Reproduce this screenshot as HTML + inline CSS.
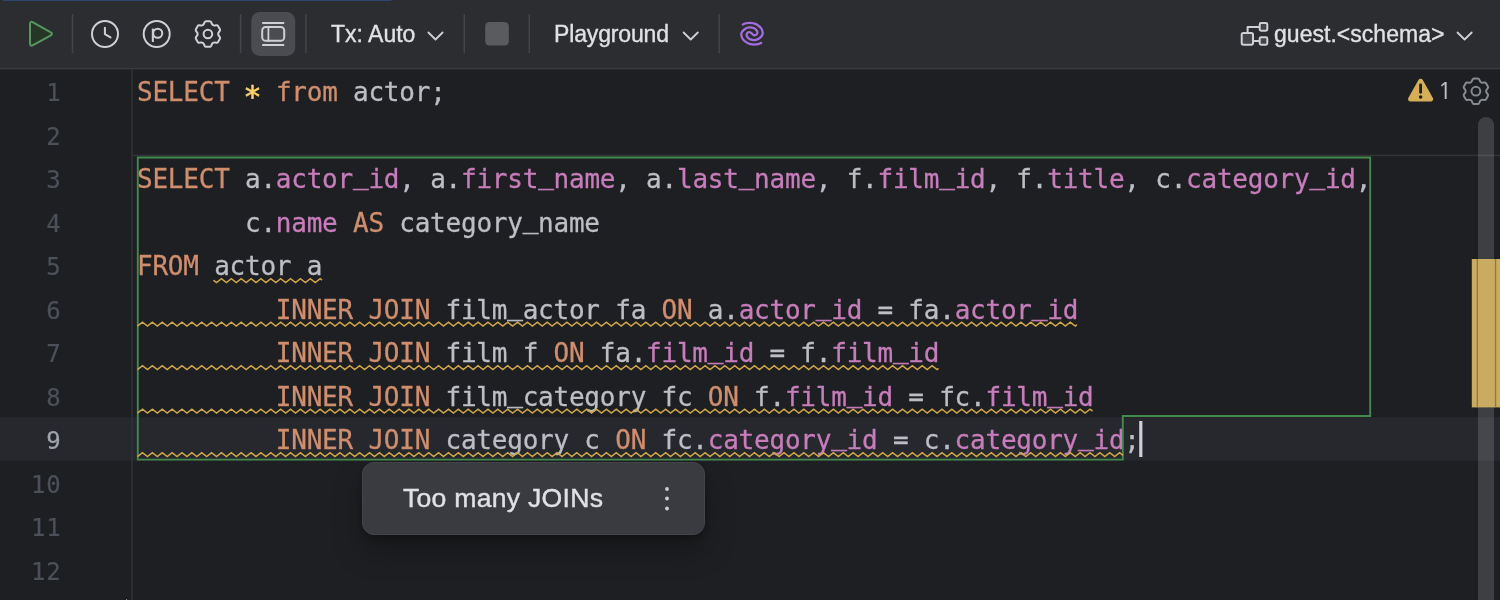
<!DOCTYPE html>
<html lang="en">
<head>
<meta charset="utf-8">
<title>Console</title>
<style>
html,body{margin:0;padding:0;}
body{width:1500px;height:600px;overflow:hidden;background:#1e1f22;position:relative;
  font-family:"Liberation Sans",sans-serif;color:#dfe1e5;}
.ln,.cl,.tbtxt,#tiptxt,#wcount{will-change:transform;}
.tbtxt{position:absolute;top:0;height:70px;line-height:69.4px;font-size:23px;-webkit-text-stroke:0.35px #dfe1e5;color:#dfe1e5;white-space:nowrap;}
svg{position:absolute;overflow:visible;}
.ln{position:absolute;left:0;width:61.6px;text-align:right;height:43.5px;line-height:44.2px;
  font-family:"DejaVu Sans Mono","Liberation Mono",monospace;font-size:24px;letter-spacing:0.9px;color:#4b5059;-webkit-text-stroke:0.2px currentColor;}
.cl{position:absolute;left:137px;height:43.5px;line-height:43.5px;white-space:pre;
  font-family:"DejaVu Sans Mono","Liberation Mono",monospace;font-size:26px;letter-spacing:-0.228px;color:#bcbec4;}
.cl i{font-style:normal;position:relative;top:-4.2px;-webkit-text-stroke:0.5px currentColor;}
.cl{-webkit-text-stroke:0.3px currentColor;}
.k{color:#cf8e6d;}
.c{color:#c77dbb;}
.s{color:#ffd36c;display:inline-block;transform:translate(-0.3px,4.7px) scale(1.18);-webkit-text-stroke:0.45px currentColor;}
#tip{position:absolute;left:362px;top:462px;width:341px;height:71px;border-radius:12px;background:#393b40;
  border:1px solid #43454a;box-shadow:0 3px 8px rgba(0,0,0,.28),0 16px 30px rgba(0,0,0,.26);}
#wcount{position:absolute;left:1438.3px;top:70px;height:42px;line-height:42px;font-size:23px;font-family:"NanumGothic","Liberation Sans",sans-serif;color:#bcbec4;-webkit-text-stroke:0.2px #bcbec4;}
#tiptxt{position:absolute;left:402.8px;top:462px;height:72px;line-height:72px;font-size:26.6px;letter-spacing:0.26px;-webkit-text-stroke:0.4px #dfe1e5;color:#dfe1e5;white-space:nowrap;}
</style>
</head>
<body>
<svg id="bg" width="1500" height="600" viewBox="0 0 1500 600" style="left:0;top:0"><rect x="0" y="0" width="1500" height="68" fill="#2b2d30"/><rect x="3" y="0" width="388.5" height="1" fill="#2f4472"/><rect x="0" y="417.3" width="1500" height="43.2" fill="#26282e"/></svg>


<div class="tbtxt" id="t1" style="left:331px">Tx: Auto</div>
<div class="tbtxt" id="t2" style="left:554.1px;letter-spacing:-0.15px">Playground</div>
<div class="tbtxt" id="t3" style="left:1274px;letter-spacing:0.03px">guest.&lt;schema&gt;</div>


<div id="lines">
<div class="ln" style="top:71.1px">1</div>
<div class="cl" style="top:71.1px"><span class="k">SELECT</span> <span class="s">*</span> <span class="k">from</span> actor;</div>
<div class="ln" style="top:114.6px">2</div>
<div class="ln" style="top:158.1px">3</div>
<div class="cl" style="top:158.1px"><span class="k">SELECT</span> a.<span class="c">actor<i>_</i>id</span>, a.<span class="c">first<i>_</i>name</span>, a.<span class="c">last<i>_</i>name</span>, f.<span class="c">film<i>_</i>id</span>, f.<span class="c">title</span>, c.<span class="c">category<i>_</i>id</span>,</div>
<div class="ln" style="top:201.6px">4</div>
<div class="cl" style="top:201.6px">       c.<span class="c">name</span> <span class="k">AS</span> category<i>_</i>name</div>
<div class="ln" style="top:245.1px">5</div>
<div class="cl" style="top:245.1px"><span class="k">FROM</span> actor a</div>
<div class="ln" style="top:288.6px">6</div>
<div class="cl" style="top:288.6px">         <span class="k">INNER JOIN</span> film<i>_</i>actor fa <span class="k">ON</span> a.<span class="c">actor<i>_</i>id</span> = fa.<span class="c">actor<i>_</i>id</span></div>
<div class="ln" style="top:332.1px">7</div>
<div class="cl" style="top:332.1px">         <span class="k">INNER JOIN</span> film f <span class="k">ON</span> fa.<span class="c">film<i>_</i>id</span> = f.<span class="c">film<i>_</i>id</span></div>
<div class="ln" style="top:375.6px">8</div>
<div class="cl" style="top:375.6px">         <span class="k">INNER JOIN</span> film<i>_</i>category fc <span class="k">ON</span> f.<span class="c">film<i>_</i>id</span> = fc.<span class="c">film<i>_</i>id</span></div>
<div class="ln" style="top:419.1px;color:#a1a3ab">9</div>
<div class="cl" style="top:419.1px">         <span class="k">INNER JOIN</span> category c <span class="k">ON</span> fc.<span class="c">category<i>_</i>id</span> = c.<span class="c">category<i>_</i>id</span>;</div>
<div class="ln" style="top:462.6px">10</div>
<div class="ln" style="top:506.1px">11</div>
<div class="ln" style="top:549.6px">12</div>
</div>

<div id="tip"></div>
<svg id="icons" width="1500" height="600" viewBox="0 0 1500 600" style="left:0;top:0" fill="none" stroke-linecap="round" stroke-linejoin="round">
<rect x="0" y="67.8" width="1500" height="1.6" fill="#393b40"/>
<rect x="131.2" y="69.4" width="1.6" height="531" fill="#2f3236"/>
<rect x="132.8" y="154.6" width="1368" height="1.6" fill="#313338"/>
<rect x="71.75" y="14.3" width="1.5" height="38.8" fill="#43454a"/>
<rect x="239.85" y="14.3" width="1.5" height="38.8" fill="#43454a"/>
<rect x="305.15" y="14.3" width="1.5" height="38.8" fill="#43454a"/>
<rect x="463.55" y="14.3" width="1.5" height="38.8" fill="#43454a"/>
<rect x="528.55" y="14.3" width="1.5" height="38.8" fill="#43454a"/>
<rect x="718.45" y="14.3" width="1.5" height="38.8" fill="#43454a"/>
<path d="M30,24.2 L30,43.3 Q30,46.8 33,45.1 L50.4,35.6 Q53.7,33.85 50.4,32.1 L33,22.4 Q30,20.7 30,24.2 Z" fill="#253627" stroke="#57965c" stroke-width="2"/>
<circle cx="105" cy="34" r="13" stroke="#ced0d6" stroke-width="2"/>
<path d="M104.9,27.8 V34.1 L110.5,37.4" stroke="#ced0d6" stroke-width="2"/>
<circle cx="156.7" cy="34" r="13" stroke="#ced0d6" stroke-width="2"/>
<path d="M152.85,28.6 V42" stroke="#ced0d6" stroke-width="2.1" stroke-linecap="butt"/>
<circle cx="157.7" cy="33.25" r="4.55" stroke="#ced0d6" stroke-width="2"/>
<path d="M211.14,22.13 Q210.74,21.21 209.74,21.21 L206.06,21.21 Q205.06,21.21 204.66,22.13 L203.95,23.75 Q203.55,24.67 202.77,25.11 L202.77,25.11 Q201.99,25.56 201.00,25.45 L199.24,25.26 Q198.24,25.15 197.74,26.02 L195.91,29.19 Q195.41,30.06 196.00,30.87 L197.05,32.30 Q197.64,33.10 197.64,34.00 L197.64,34.00 Q197.64,34.90 197.05,35.70 L196.00,37.13 Q195.41,37.94 195.91,38.81 L197.74,41.98 Q198.24,42.85 199.24,42.74 L201.00,42.55 Q201.99,42.44 202.77,42.89 L202.77,42.89 Q203.55,43.33 203.95,44.25 L204.66,45.87 Q205.06,46.79 206.06,46.79 L209.74,46.79 Q210.74,46.79 211.14,45.87 L211.85,44.25 Q212.25,43.33 213.03,42.89 L213.03,42.89 Q213.81,42.44 214.80,42.55 L216.56,42.74 Q217.56,42.85 218.06,41.98 L219.89,38.81 Q220.39,37.94 219.80,37.13 L218.75,35.70 Q218.16,34.90 218.16,34.00 L218.16,34.00 Q218.16,33.10 218.75,32.30 L219.80,30.87 Q220.39,30.06 219.89,29.19 L218.06,26.02 Q217.56,25.15 216.56,25.26 L214.80,25.45 Q213.81,25.56 213.03,25.11 L213.03,25.11 Q212.25,24.67 211.85,23.75Z" stroke="#ced0d6" stroke-width="2"/>
<circle cx="207.9" cy="34" r="4.3" stroke="#ced0d6" stroke-width="2"/>
<rect x="251.3" y="12" width="43.9" height="43.9" rx="8.5" fill="#4b4c51"/>
<path d="M262.2,23 H284.2 M262.2,45 H284.2" stroke="#ced0d6" stroke-width="2" stroke-linecap="butt"/>
<rect x="262.2" y="27" width="22" height="13.8" rx="3.6" stroke="#ced0d6" stroke-width="2"/>
<path d="M268.4,27 V40.8" stroke="#ced0d6" stroke-width="1.8"/>
<path d="M428.4,32.5 L435.5,39.5 L442.6,32.5" stroke="#ced0d6" stroke-width="1.8"/>
<path d="M683.6,32.5 L690.7,39.5 L697.8,32.5" stroke="#ced0d6" stroke-width="1.8"/>
<path d="M1457.5,32.5 L1464.6,39.5 L1471.7,32.5" stroke="#ced0d6" stroke-width="1.8"/>
<rect x="485.2" y="22" width="23.6" height="23.6" rx="4.2" fill="#5a5b5e"/>
<path d="M742.78,24.51 C743.34,24.30 744.94,23.52 746.11,23.25 C747.28,22.98 748.60,22.87 749.82,22.87 C751.03,22.87 752.27,22.98 753.42,23.25 C754.58,23.52 755.45,23.67 756.75,24.51 C758.05,25.36 760.22,26.94 761.22,28.31 C762.21,29.69 762.64,31.49 762.74,32.75 C762.83,34.01 762.47,34.89 761.78,35.89 C761.10,36.88 759.81,38.04 758.65,38.73 C757.49,39.43 756.23,39.93 754.85,40.04 C753.47,40.15 751.60,39.88 750.38,39.40 C749.17,38.93 748.17,37.98 747.53,37.19 C746.90,36.39 746.52,35.42 746.59,34.65 C746.65,33.88 747.31,32.96 747.91,32.56 C748.52,32.16 749.51,32.09 750.20,32.28 C750.88,32.47 751.40,33.23 752.00,33.70 C752.60,34.18 753.12,34.94 753.80,35.12 C754.49,35.31 755.48,35.24 756.09,34.84 C756.69,34.44 757.35,33.52 757.41,32.75 C757.48,31.98 757.10,31.01 756.47,30.21 C755.83,29.42 754.83,28.48 753.62,28.00 C752.40,27.53 750.53,27.25 749.15,27.36 C747.77,27.47 746.51,27.97 745.35,28.67 C744.19,29.36 742.90,30.52 742.22,31.52 C741.53,32.51 741.17,33.39 741.26,34.65 C741.36,35.91 741.79,37.71 742.78,39.09 C743.78,40.46 745.95,42.04 747.25,42.89 C748.55,43.73 749.42,43.88 750.58,44.15 C751.73,44.42 752.97,44.53 754.18,44.53 C755.40,44.53 756.72,44.42 757.89,44.15 C759.06,43.88 760.66,43.10 761.22,42.89" stroke="#a56de2" stroke-width="2.25"/>
<path d="M1247.6,33 V27 H1259.5 M1254,41 H1259.5" stroke="#ced0d6" stroke-width="2"/>
<rect x="1241.7" y="33" width="11.3" height="11.7" rx="1.6" fill="#43454a" stroke="#ced0d6" stroke-width="2"/>
<rect x="1259.7" y="23" width="7.6" height="7.7" rx="1.4" fill="#43454a" stroke="#ced0d6" stroke-width="2"/>
<rect x="1259.7" y="37.2" width="7.6" height="7.5" rx="1.4" fill="#43454a" stroke="#ced0d6" stroke-width="2"/>
<path d="M1420.6,81.3 L1430.6,99 H1410.6 Z" fill="#d6ae58" stroke="#d6ae58" stroke-width="5"/>
<path d="M1420.6,84.8 V92.3" stroke="#1e1f22" stroke-width="2.8"/>
<circle cx="1420.6" cy="97" r="1.75" fill="#1e1f22"/>
<path d="M1479.14,79.33 Q1478.74,78.41 1477.74,78.41 L1474.06,78.41 Q1473.06,78.41 1472.66,79.33 L1471.95,80.95 Q1471.55,81.87 1470.77,82.31 L1470.77,82.31 Q1469.99,82.76 1469.00,82.65 L1467.24,82.46 Q1466.24,82.35 1465.74,83.22 L1463.91,86.39 Q1463.41,87.26 1464.00,88.07 L1465.05,89.50 Q1465.64,90.30 1465.64,91.20 L1465.64,91.20 Q1465.64,92.10 1465.05,92.90 L1464.00,94.33 Q1463.41,95.14 1463.91,96.01 L1465.74,99.18 Q1466.24,100.05 1467.24,99.94 L1469.00,99.75 Q1469.99,99.64 1470.77,100.09 L1470.77,100.09 Q1471.55,100.53 1471.95,101.45 L1472.66,103.07 Q1473.06,103.99 1474.06,103.99 L1477.74,103.99 Q1478.74,103.99 1479.14,103.07 L1479.85,101.45 Q1480.25,100.53 1481.03,100.09 L1481.03,100.09 Q1481.81,99.64 1482.80,99.75 L1484.56,99.94 Q1485.56,100.05 1486.06,99.18 L1487.89,96.01 Q1488.39,95.14 1487.80,94.33 L1486.75,92.90 Q1486.16,92.10 1486.16,91.20 L1486.16,91.20 Q1486.16,90.30 1486.75,89.50 L1487.80,88.07 Q1488.39,87.26 1487.89,86.39 L1486.06,83.22 Q1485.56,82.35 1484.56,82.46 L1482.80,82.65 Q1481.81,82.76 1481.03,82.31 L1481.03,82.31 Q1480.25,81.87 1479.85,80.95Z" stroke="#868a91" stroke-width="2"/>
<circle cx="1475.9" cy="91.2" r="4.4" stroke="#868a91" stroke-width="2"/>
<path d="M137.8,157.5 H1370.2 V416 H1122.8 V459.6 H137.8 Z" stroke="#42894d" stroke-width="1.9" stroke-linejoin="miter"/>
<path d="M214.00,280.55 L216.52,282.55 L221.46,278.65 L226.39,282.55 L231.33,278.65 L236.26,282.55 L241.20,278.65 L246.13,282.55 L251.07,278.65 L256.00,282.55 L260.94,278.65 L265.88,282.55 L270.81,278.65 L275.75,282.55 L280.68,278.65 L285.62,282.55 L290.55,278.65 L295.49,282.55 L300.42,278.65 L305.36,282.55 L310.29,278.65 L315.23,282.55 L320.16,278.65 L321.50,279.71" stroke="#d0a748" stroke-width="1.55" stroke-linejoin="miter"/>
<path d="M138.00,325.71 L142.50,322.15 L147.44,326.05 L152.37,322.15 L157.31,326.05 L162.24,322.15 L167.18,326.05 L172.11,322.15 L177.04,326.05 L181.98,322.15 L186.91,326.05 L191.85,322.15 L196.78,326.05 L201.72,322.15 L206.66,326.05 L211.59,322.15 L216.52,326.05 L221.46,322.15 L226.39,326.05 L231.33,322.15 L236.26,326.05 L241.20,322.15 L246.13,326.05 L251.07,322.15 L256.00,326.05 L260.94,322.15 L265.88,326.05 L270.81,322.15 L275.75,326.05 L280.68,322.15 L285.62,326.05 L290.55,322.15 L295.49,326.05 L300.42,322.15 L305.36,326.05 L310.29,322.15 L315.23,326.05 L320.16,322.15 L325.10,326.05 L330.03,322.15 L334.96,326.05 L339.90,322.15 L344.83,326.05 L349.77,322.15 L354.70,326.05 L359.64,322.15 L364.57,326.05 L369.51,322.15 L374.44,326.05 L379.38,322.15 L384.31,326.05 L389.25,322.15 L394.18,326.05 L399.12,322.15 L404.06,326.05 L408.99,322.15 L413.92,326.05 L418.86,322.15 L423.79,326.05 L428.73,322.15 L433.66,326.05 L438.60,322.15 L443.53,326.05 L448.47,322.15 L453.40,326.05 L458.34,322.15 L463.27,326.05 L468.21,322.15 L473.14,326.05 L478.08,322.15 L483.01,326.05 L487.95,322.15 L492.88,326.05 L497.82,322.15 L502.75,326.05 L507.69,322.15 L512.62,326.05 L517.56,322.15 L522.49,326.05 L527.43,322.15 L532.37,326.05 L537.30,322.15 L542.23,326.05 L547.17,322.15 L552.11,326.05 L557.04,322.15 L561.97,326.05 L566.91,322.15 L571.85,326.05 L576.78,322.15 L581.71,326.05 L586.65,322.15 L591.59,326.05 L596.52,322.15 L601.45,326.05 L606.39,322.15 L611.33,326.05 L616.26,322.15 L621.19,326.05 L626.13,322.15 L631.06,326.05 L636.00,322.15 L640.93,326.05 L645.87,322.15 L650.80,326.05 L655.74,322.15 L660.67,326.05 L665.61,322.15 L670.54,326.05 L675.48,322.15 L680.41,326.05 L685.35,322.15 L690.28,326.05 L695.22,322.15 L700.15,326.05 L705.09,322.15 L710.02,326.05 L714.96,322.15 L719.89,326.05 L724.83,322.15 L729.76,326.05 L734.70,322.15 L739.63,326.05 L744.57,322.15 L749.50,326.05 L754.44,322.15 L759.38,326.05 L764.31,322.15 L769.25,326.05 L774.18,322.15 L779.11,326.05 L784.05,322.15 L788.98,326.05 L793.92,322.15 L798.85,326.05 L803.79,322.15 L808.72,326.05 L813.66,322.15 L818.59,326.05 L823.53,322.15 L828.46,326.05 L833.40,322.15 L838.33,326.05 L843.27,322.15 L848.20,326.05 L853.14,322.15 L858.07,326.05 L863.01,322.15 L867.94,326.05 L872.88,322.15 L877.81,326.05 L882.75,322.15 L887.68,326.05 L892.62,322.15 L897.55,326.05 L902.49,322.15 L907.42,326.05 L912.36,322.15 L917.29,326.05 L922.23,322.15 L927.16,326.05 L932.10,322.15 L937.03,326.05 L941.97,322.15 L946.90,326.05 L951.84,322.15 L956.77,326.05 L961.71,322.15 L966.64,326.05 L971.58,322.15 L976.51,326.05 L981.45,322.15 L986.38,326.05 L991.32,322.15 L996.25,326.05 L1001.19,322.15 L1006.12,326.05 L1011.06,322.15 L1015.99,326.05 L1020.93,322.15 L1025.86,326.05 L1030.80,322.15 L1035.73,326.05 L1040.67,322.15 L1045.61,326.05 L1050.54,322.15 L1055.47,326.05 L1060.41,322.15 L1065.34,326.05 L1070.28,322.15 L1075.21,326.05 L1076.50,325.03" stroke="#d0a748" stroke-width="1.55" stroke-linejoin="miter"/>
<path d="M138.00,369.21 L142.50,365.65 L147.44,369.55 L152.37,365.65 L157.31,369.55 L162.24,365.65 L167.18,369.55 L172.11,365.65 L177.04,369.55 L181.98,365.65 L186.91,369.55 L191.85,365.65 L196.78,369.55 L201.72,365.65 L206.66,369.55 L211.59,365.65 L216.52,369.55 L221.46,365.65 L226.39,369.55 L231.33,365.65 L236.26,369.55 L241.20,365.65 L246.13,369.55 L251.07,365.65 L256.00,369.55 L260.94,365.65 L265.88,369.55 L270.81,365.65 L275.75,369.55 L280.68,365.65 L285.62,369.55 L290.55,365.65 L295.49,369.55 L300.42,365.65 L305.36,369.55 L310.29,365.65 L315.23,369.55 L320.16,365.65 L325.10,369.55 L330.03,365.65 L334.96,369.55 L339.90,365.65 L344.83,369.55 L349.77,365.65 L354.70,369.55 L359.64,365.65 L364.57,369.55 L369.51,365.65 L374.44,369.55 L379.38,365.65 L384.31,369.55 L389.25,365.65 L394.18,369.55 L399.12,365.65 L404.06,369.55 L408.99,365.65 L413.92,369.55 L418.86,365.65 L423.79,369.55 L428.73,365.65 L433.66,369.55 L438.60,365.65 L443.53,369.55 L448.47,365.65 L453.40,369.55 L458.34,365.65 L463.27,369.55 L468.21,365.65 L473.14,369.55 L478.08,365.65 L483.01,369.55 L487.95,365.65 L492.88,369.55 L497.82,365.65 L502.75,369.55 L507.69,365.65 L512.62,369.55 L517.56,365.65 L522.49,369.55 L527.43,365.65 L532.37,369.55 L537.30,365.65 L542.23,369.55 L547.17,365.65 L552.11,369.55 L557.04,365.65 L561.97,369.55 L566.91,365.65 L571.85,369.55 L576.78,365.65 L581.71,369.55 L586.65,365.65 L591.59,369.55 L596.52,365.65 L601.45,369.55 L606.39,365.65 L611.33,369.55 L616.26,365.65 L621.19,369.55 L626.13,365.65 L631.06,369.55 L636.00,365.65 L640.93,369.55 L645.87,365.65 L650.80,369.55 L655.74,365.65 L660.67,369.55 L665.61,365.65 L670.54,369.55 L675.48,365.65 L680.41,369.55 L685.35,365.65 L690.28,369.55 L695.22,365.65 L700.15,369.55 L705.09,365.65 L710.02,369.55 L714.96,365.65 L719.89,369.55 L724.83,365.65 L729.76,369.55 L734.70,365.65 L739.63,369.55 L744.57,365.65 L749.50,369.55 L754.44,365.65 L759.38,369.55 L764.31,365.65 L769.25,369.55 L774.18,365.65 L779.11,369.55 L784.05,365.65 L788.98,369.55 L793.92,365.65 L798.85,369.55 L803.79,365.65 L808.72,369.55 L813.66,365.65 L818.59,369.55 L823.53,365.65 L828.46,369.55 L833.40,365.65 L838.33,369.55 L843.27,365.65 L848.20,369.55 L853.14,365.65 L858.07,369.55 L863.01,365.65 L867.94,369.55 L872.88,365.65 L877.81,369.55 L882.75,365.65 L887.68,369.55 L892.62,365.65 L897.55,369.55 L902.49,365.65 L907.42,369.55 L912.36,365.65 L917.29,369.55 L922.23,365.65 L927.16,369.55 L932.10,365.65 L937.03,369.55 L938.00,368.79" stroke="#d0a748" stroke-width="1.55" stroke-linejoin="miter"/>
<path d="M138.00,412.71 L142.50,409.15 L147.44,413.05 L152.37,409.15 L157.31,413.05 L162.24,409.15 L167.18,413.05 L172.11,409.15 L177.04,413.05 L181.98,409.15 L186.91,413.05 L191.85,409.15 L196.78,413.05 L201.72,409.15 L206.66,413.05 L211.59,409.15 L216.52,413.05 L221.46,409.15 L226.39,413.05 L231.33,409.15 L236.26,413.05 L241.20,409.15 L246.13,413.05 L251.07,409.15 L256.00,413.05 L260.94,409.15 L265.88,413.05 L270.81,409.15 L275.75,413.05 L280.68,409.15 L285.62,413.05 L290.55,409.15 L295.49,413.05 L300.42,409.15 L305.36,413.05 L310.29,409.15 L315.23,413.05 L320.16,409.15 L325.10,413.05 L330.03,409.15 L334.96,413.05 L339.90,409.15 L344.83,413.05 L349.77,409.15 L354.70,413.05 L359.64,409.15 L364.57,413.05 L369.51,409.15 L374.44,413.05 L379.38,409.15 L384.31,413.05 L389.25,409.15 L394.18,413.05 L399.12,409.15 L404.06,413.05 L408.99,409.15 L413.92,413.05 L418.86,409.15 L423.79,413.05 L428.73,409.15 L433.66,413.05 L438.60,409.15 L443.53,413.05 L448.47,409.15 L453.40,413.05 L458.34,409.15 L463.27,413.05 L468.21,409.15 L473.14,413.05 L478.08,409.15 L483.01,413.05 L487.95,409.15 L492.88,413.05 L497.82,409.15 L502.75,413.05 L507.69,409.15 L512.62,413.05 L517.56,409.15 L522.49,413.05 L527.43,409.15 L532.37,413.05 L537.30,409.15 L542.23,413.05 L547.17,409.15 L552.11,413.05 L557.04,409.15 L561.97,413.05 L566.91,409.15 L571.85,413.05 L576.78,409.15 L581.71,413.05 L586.65,409.15 L591.59,413.05 L596.52,409.15 L601.45,413.05 L606.39,409.15 L611.33,413.05 L616.26,409.15 L621.19,413.05 L626.13,409.15 L631.06,413.05 L636.00,409.15 L640.93,413.05 L645.87,409.15 L650.80,413.05 L655.74,409.15 L660.67,413.05 L665.61,409.15 L670.54,413.05 L675.48,409.15 L680.41,413.05 L685.35,409.15 L690.28,413.05 L695.22,409.15 L700.15,413.05 L705.09,409.15 L710.02,413.05 L714.96,409.15 L719.89,413.05 L724.83,409.15 L729.76,413.05 L734.70,409.15 L739.63,413.05 L744.57,409.15 L749.50,413.05 L754.44,409.15 L759.38,413.05 L764.31,409.15 L769.25,413.05 L774.18,409.15 L779.11,413.05 L784.05,409.15 L788.98,413.05 L793.92,409.15 L798.85,413.05 L803.79,409.15 L808.72,413.05 L813.66,409.15 L818.59,413.05 L823.53,409.15 L828.46,413.05 L833.40,409.15 L838.33,413.05 L843.27,409.15 L848.20,413.05 L853.14,409.15 L858.07,413.05 L863.01,409.15 L867.94,413.05 L872.88,409.15 L877.81,413.05 L882.75,409.15 L887.68,413.05 L892.62,409.15 L897.55,413.05 L902.49,409.15 L907.42,413.05 L912.36,409.15 L917.29,413.05 L922.23,409.15 L927.16,413.05 L932.10,409.15 L937.03,413.05 L941.97,409.15 L946.90,413.05 L951.84,409.15 L956.77,413.05 L961.71,409.15 L966.64,413.05 L971.58,409.15 L976.51,413.05 L981.45,409.15 L986.38,413.05 L991.32,409.15 L996.25,413.05 L1001.19,409.15 L1006.12,413.05 L1011.06,409.15 L1015.99,413.05 L1020.93,409.15 L1025.86,413.05 L1030.80,409.15 L1035.73,413.05 L1040.67,409.15 L1045.61,413.05 L1050.54,409.15 L1055.47,413.05 L1060.41,409.15 L1065.34,413.05 L1070.28,409.15 L1075.21,413.05 L1080.15,409.15 L1085.09,413.05 L1090.02,409.15 L1092.00,410.71" stroke="#d0a748" stroke-width="1.55" stroke-linejoin="miter"/>
<path d="M138.00,456.21 L142.50,452.65 L147.44,456.55 L152.37,452.65 L157.31,456.55 L162.24,452.65 L167.18,456.55 L172.11,452.65 L177.04,456.55 L181.98,452.65 L186.91,456.55 L191.85,452.65 L196.78,456.55 L201.72,452.65 L206.66,456.55 L211.59,452.65 L216.52,456.55 L221.46,452.65 L226.39,456.55 L231.33,452.65 L236.26,456.55 L241.20,452.65 L246.13,456.55 L251.07,452.65 L256.00,456.55 L260.94,452.65 L265.88,456.55 L270.81,452.65 L275.75,456.55 L280.68,452.65 L285.62,456.55 L290.55,452.65 L295.49,456.55 L300.42,452.65 L305.36,456.55 L310.29,452.65 L315.23,456.55 L320.16,452.65 L325.10,456.55 L330.03,452.65 L334.96,456.55 L339.90,452.65 L344.83,456.55 L349.77,452.65 L354.70,456.55 L359.64,452.65 L364.57,456.55 L369.51,452.65 L374.44,456.55 L379.38,452.65 L384.31,456.55 L389.25,452.65 L394.18,456.55 L399.12,452.65 L404.06,456.55 L408.99,452.65 L413.92,456.55 L418.86,452.65 L423.79,456.55 L428.73,452.65 L433.66,456.55 L438.60,452.65 L443.53,456.55 L448.47,452.65 L453.40,456.55 L458.34,452.65 L463.27,456.55 L468.21,452.65 L473.14,456.55 L478.08,452.65 L483.01,456.55 L487.95,452.65 L492.88,456.55 L497.82,452.65 L502.75,456.55 L507.69,452.65 L512.62,456.55 L517.56,452.65 L522.49,456.55 L527.43,452.65 L532.37,456.55 L537.30,452.65 L542.23,456.55 L547.17,452.65 L552.11,456.55 L557.04,452.65 L561.97,456.55 L566.91,452.65 L571.85,456.55 L576.78,452.65 L581.71,456.55 L586.65,452.65 L591.59,456.55 L596.52,452.65 L601.45,456.55 L606.39,452.65 L611.33,456.55 L616.26,452.65 L621.19,456.55 L626.13,452.65 L631.06,456.55 L636.00,452.65 L640.93,456.55 L645.87,452.65 L650.80,456.55 L655.74,452.65 L660.67,456.55 L665.61,452.65 L670.54,456.55 L675.48,452.65 L680.41,456.55 L685.35,452.65 L690.28,456.55 L695.22,452.65 L700.15,456.55 L705.09,452.65 L710.02,456.55 L714.96,452.65 L719.89,456.55 L724.83,452.65 L729.76,456.55 L734.70,452.65 L739.63,456.55 L744.57,452.65 L749.50,456.55 L754.44,452.65 L759.38,456.55 L764.31,452.65 L769.25,456.55 L774.18,452.65 L779.11,456.55 L784.05,452.65 L788.98,456.55 L793.92,452.65 L798.85,456.55 L803.79,452.65 L808.72,456.55 L813.66,452.65 L818.59,456.55 L823.53,452.65 L828.46,456.55 L833.40,452.65 L838.33,456.55 L843.27,452.65 L848.20,456.55 L853.14,452.65 L858.07,456.55 L863.01,452.65 L867.94,456.55 L872.88,452.65 L877.81,456.55 L882.75,452.65 L887.68,456.55 L892.62,452.65 L897.55,456.55 L902.49,452.65 L907.42,456.55 L912.36,452.65 L917.29,456.55 L922.23,452.65 L927.16,456.55 L932.10,452.65 L937.03,456.55 L941.97,452.65 L946.90,456.55 L951.84,452.65 L956.77,456.55 L961.71,452.65 L966.64,456.55 L971.58,452.65 L976.51,456.55 L981.45,452.65 L986.38,456.55 L991.32,452.65 L996.25,456.55 L1001.19,452.65 L1006.12,456.55 L1011.06,452.65 L1015.99,456.55 L1020.93,452.65 L1025.86,456.55 L1030.80,452.65 L1035.73,456.55 L1040.67,452.65 L1045.61,456.55 L1050.54,452.65 L1055.47,456.55 L1060.41,452.65 L1065.34,456.55 L1070.28,452.65 L1075.21,456.55 L1080.15,452.65 L1085.09,456.55 L1090.02,452.65 L1094.95,456.55 L1099.89,452.65 L1104.82,456.55 L1109.76,452.65 L1114.69,456.55 L1119.63,452.65 L1122.50,454.92" stroke="#d0a748" stroke-width="1.55" stroke-linejoin="miter"/>
<rect x="1139.2" y="421" width="3.2" height="36" fill="#ced0d6"/>
<path d="M1478,125 A8,8 0 0 1 1494,125 V600 H1478 Z" fill="#ffffff" fill-opacity="0.147"/>
<rect x="1471.8" y="259" width="28.2" height="148.4" fill="#c9ab61"/>
<rect x="1476.7" y="259" width="1.3" height="148.4" fill="#937a3c"/>
<rect x="1494.9" y="259" width="1.3" height="148.4" fill="#937a3c"/>
<circle cx="667" cy="489.0" r="1.9" fill="#ced0d6"/>
<circle cx="667" cy="498.5" r="1.9" fill="#ced0d6"/>
<circle cx="667" cy="508.5" r="1.9" fill="#ced0d6"/>
<path d="M126.5,598.2 L127.6,600 H125.4 Z" fill="#ffffff" stroke="#000" stroke-width="0.7"/>
</svg>
<!--ICONS-->
<div id="wcount">1</div>
<div id="tiptxt">Too many JOINs</div>
</body>
</html>
